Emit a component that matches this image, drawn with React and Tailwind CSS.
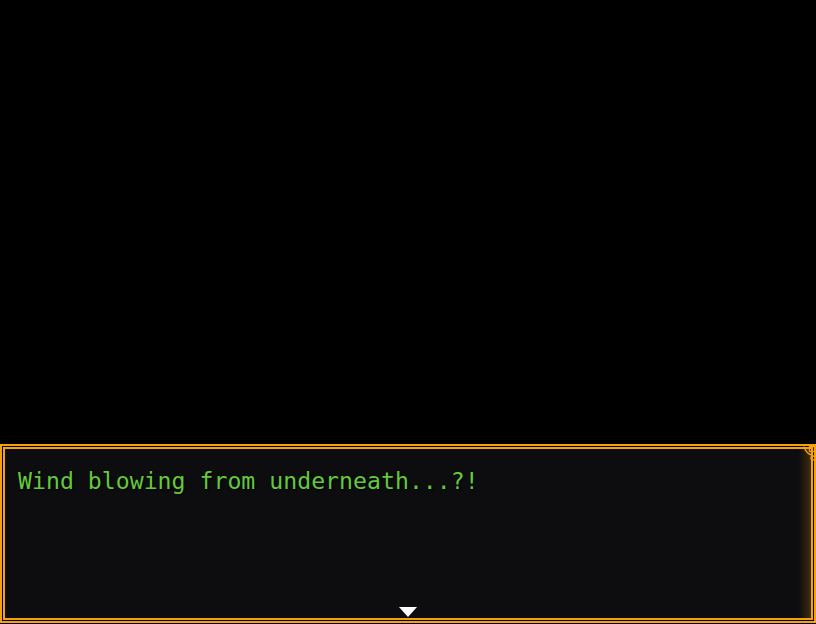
import React from 'react';

const CornerOrnament = () => (
  <svg width="18" height="18" viewBox="0 0 18 18" className="absolute -right-[2px] -top-[2px]" fill="none">
    <path d="M6 2.5 Q8 8.5 12 10.5 L14 10.5" stroke="#f7a10a" strokeWidth="1.4" />
    <rect x="11.5" y="2.5" width="5" height="5" stroke="#f7a10a" strokeWidth="1.4" />
    <rect x="13.5" y="4.5" width="1.2" height="1.2" fill="#f7a10a" />
    <circle cx="15" cy="14" r="2" stroke="#f7a10a" strokeWidth="1.4" />
  </svg>
);

const App = () => {
  return (
    <div className="w-[816px] h-[624px] bg-black flex flex-col overflow-hidden">
      <div className="h-[444px] shrink-0" />
      <div className="relative h-[179px] border-2 border-[#f7a10a] bg-black p-px">
        <div className="relative h-full border-2 border-[#f7a10a] bg-[#0d0d10] overflow-hidden">
          <div className="absolute right-0 top-0 bottom-0 w-[12px] bg-gradient-to-r from-transparent to-[#5a3a08]/70" />
          <p
            className="relative pl-[13px] pt-[18px] text-[23.2px] leading-[1.2] text-[#63c93c] [text-shadow:1px_1px_2px_#000]"
            style={{ fontFamily: '"DejaVu Sans Mono", monospace' }}
          >
            Wind blowing from underneath...?!
          </p>
          <div className="absolute left-[394px] bottom-[1px] w-0 h-0 border-l-[9px] border-r-[9px] border-t-[10px] border-l-transparent border-r-transparent border-t-white" />
        </div>
        <CornerOrnament />
      </div>
    </div>
  );
};

export default App;
